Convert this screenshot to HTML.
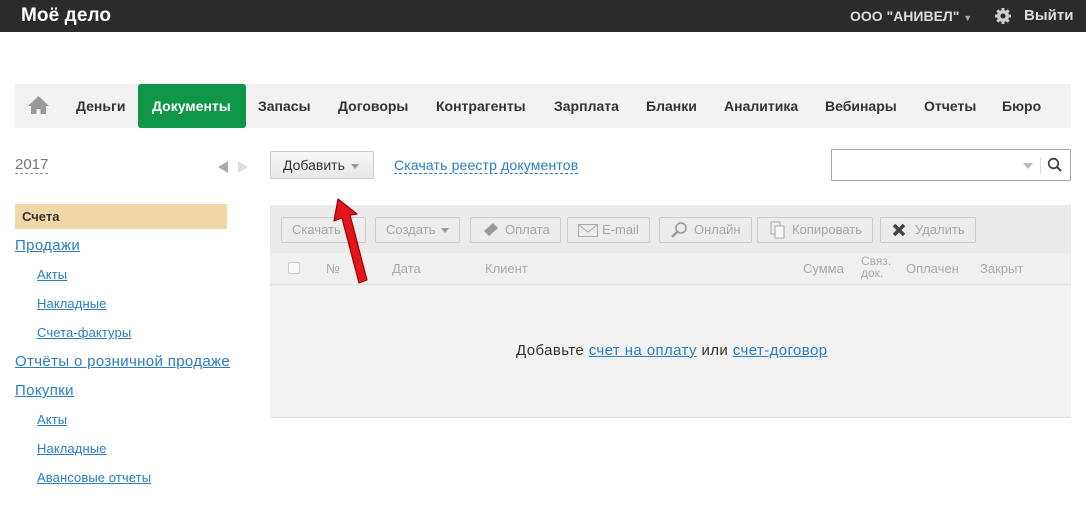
<!DOCTYPE html>
<html><head><meta charset="utf-8"><style>
*{box-sizing:border-box;margin:0;padding:0}
body{width:1086px;height:506px;background:#fff;font-family:"Liberation Sans",Arial,sans-serif;position:relative;overflow:hidden;color:#333}
.a{position:absolute;white-space:nowrap}
#top{left:0;top:0;width:1086px;height:32px;background:#2b2b2b}
#nav{left:15px;top:84px;width:1056px;height:44px;background:#f2f2f2}
.ni{position:absolute;top:14px;font-size:14px;font-weight:bold;color:#333}
.btn{position:absolute;top:12px;height:26px;border:1px solid #ccc;border-radius:2px;background:#ececec;color:#a8a8a8;font-size:13px;line-height:24px;padding:0 10px}
.car{display:inline-block;width:0;height:0;border-left:4px solid transparent;border-right:4px solid transparent;border-top:5px solid #999;vertical-align:middle;margin-left:6px}
a,.lk{color:#2a7ec1;text-decoration:underline}
.sb{position:absolute;left:15px;font-size:15px;letter-spacing:0.35px;color:#2a7ec1;text-decoration:underline}
.ss{position:absolute;left:37px;font-size:13px;letter-spacing:0.1px;color:#2a7ec1;text-decoration:underline}
.th{position:absolute;font-size:13px;color:#aaa}
</style></head><body>
<div class="a" id="top">
 <div class="a" style="left:21px;top:5px;font-size:19px;font-weight:bold;color:#fff;letter-spacing:0.1px">Моё дело</div>
 <div class="a" style="left:850px;top:8px;font-size:14px;font-weight:bold;color:#ddd">ООО "АНИВЕЛ" <span style="font-size:9px;color:#aaa">▼</span></div>
 <svg class="a" style="left:994px;top:7px" width="18" height="18" viewBox="0 0 18 18"><g fill="#ccc"><circle cx="9" cy="9" r="6"/><rect x="7.5" y="1" width="3" height="16"/><rect x="1" y="7.5" width="16" height="3"/><rect x="7.5" y="1" width="3" height="16" transform="rotate(45 9 9)"/><rect x="7.5" y="1" width="3" height="16" transform="rotate(-45 9 9)"/></g><circle cx="9" cy="9" r="2.5" fill="#2b2b2b"/></svg>
 <div class="a" style="left:1024px;top:7px;font-size:15px;font-weight:bold;color:#ddd">Выйти</div>
</div>
<div class="a" id="nav">
 <svg class="a" style="left:12px;top:11px" width="23" height="20" viewBox="0 0 23 20"><path d="M11.5 1L1 11h3v8h5.5v-5h4v5H19v-8h3z" fill="#999"/></svg>
 <div class="ni" style="left:61px">Деньги</div>
 <div class="a" style="left:123px;top:0;width:108px;height:44px;background:#0f9648;border-radius:3px"></div>
 <div class="ni" style="left:137px;color:#fff">Документы</div>
 <div class="ni" style="left:243px">Запасы</div>
 <div class="ni" style="left:323px">Договоры</div>
 <div class="ni" style="left:421px">Контрагенты</div>
 <div class="ni" style="left:539px">Зарплата</div>
 <div class="ni" style="left:631px">Бланки</div>
 <div class="ni" style="left:709px">Аналитика</div>
 <div class="ni" style="left:810px">Вебинары</div>
 <div class="ni" style="left:909px">Отчеты</div>
 <div class="ni" style="left:987px">Бюро</div>
</div>
<div class="a" style="left:15px;top:156px;font-size:15px;color:#777;border-bottom:1px dashed #999;line-height:17px">2017</div>
<div class="a" style="left:218px;top:161px;width:0;height:0;border-top:6px solid transparent;border-bottom:6px solid transparent;border-right:10px solid #aaa"></div>
<div class="a" style="left:238px;top:161px;width:0;height:0;border-top:6px solid transparent;border-bottom:6px solid transparent;border-left:10px solid #ddd"></div>
<div class="a" style="left:15px;top:204px;width:212px;height:25px;background:#f2d8a6"></div>
<div class="a" style="left:22px;top:209px;font-size:13px;font-weight:bold;color:#333">Счета</div>
<div class="sb" style="top:237px">Продажи</div>
<div class="ss" style="top:267px">Акты</div>
<div class="ss" style="top:296px">Накладные</div>
<div class="ss" style="top:325px">Счета-фактуры</div>
<div class="sb" style="top:353px">Отчёты о розничной продаже</div>
<div class="sb" style="top:382px">Покупки</div>
<div class="ss" style="top:412px">Акты</div>
<div class="ss" style="top:441px">Накладные</div>
<div class="ss" style="top:470px">Авансовые отчеты</div>

<div class="a" style="left:270px;top:151px;width:104px;height:28px;border:1px solid #c8c8c8;border-radius:2px;background:linear-gradient(#f7f7f7,#e8e8e8);font-size:14px;color:#333;line-height:26px;padding-left:12px">Добавить<span class="car"></span></div>
<div class="a" style="left:394px;top:157px;font-size:14px;letter-spacing:0.15px;color:#2a7ec1;border-bottom:1px dashed #2a7ec1;line-height:16px">Скачать реестр документов</div>
<div class="a" style="left:831px;top:149px;width:240px;height:32px;border:1px solid #aaa;background:#fff">
 <div class="a" style="left:191px;top:13px;width:0;height:0;border-left:5px solid transparent;border-right:5px solid transparent;border-top:6px solid #bbb"></div>
 <div class="a" style="left:208px;top:7px;width:1px;height:17px;background:#ddd"></div>
 <svg class="a" style="left:215px;top:7px" width="16" height="16" viewBox="0 0 16 16"><circle cx="6.5" cy="6.5" r="4.8" stroke="#444" stroke-width="1.8" fill="none"/><path d="M10 10l4 4" stroke="#444" stroke-width="2"/></svg>
</div>

<div class="a" style="left:270px;top:205px;width:801px;height:213px;background:#ebebeb;border-bottom:1px solid #ddd">
 <div class="btn" style="left:11px">Скачать<span class="car"></span></div>
 <div class="btn" style="left:105px">Создать<span class="car"></span></div>
 <div class="btn" style="left:200px;padding-left:34px">Оплата</div>
 <div class="btn" style="left:297px;padding-left:34px">E-mail</div>
 <div class="btn" style="left:389px;padding-left:34px">Онлайн</div>
 <div class="btn" style="left:487px;padding-left:34px">Копировать</div>
 <div class="btn" style="left:610px;padding-left:34px">Удалить</div>
 <svg class="a" style="left:212px;top:17px" width="18" height="16"><path d="M2 9l9-8 5 5-9 8z" fill="#999"/></svg>
 <svg class="a" style="left:308px;top:19px" width="20" height="13"><rect x="0.5" y="0.5" width="19" height="12" fill="none" stroke="#aaa"/><path d="M1 1l9 7 9-7" fill="none" stroke="#aaa"/></svg>
 <svg class="a" style="left:400px;top:16px" width="18" height="18"><circle cx="11" cy="7" r="5" fill="none" stroke="#999" stroke-width="1.5"/><path d="M7 11l-5 5" stroke="#999" stroke-width="2.5"/></svg>
 <svg class="a" style="left:500px;top:16px" width="16" height="18"><rect x="1" y="1" width="9" height="12" fill="#eee" stroke="#aaa"/><rect x="5" y="5" width="9" height="12" fill="#f6f6f6" stroke="#aaa"/></svg>
 <svg class="a" style="left:622px;top:18px" width="14" height="14"><path d="M2 2l10 10M12 2L2 12" stroke="#444" stroke-width="3.5"/></svg>
 <div class="a" style="left:0;top:48px;width:801px;height:32px;background:#f0f0f0;border-bottom:1px solid #e2e2e2"></div>
 <div class="a" style="left:18px;top:57px;width:12px;height:12px;border:1px solid #ccc;border-radius:2px;background:#f8f8f8"></div>
 <div class="th" style="left:56px;top:56px">№</div>
 <div class="th" style="left:122px;top:56px">Дата</div>
 <div class="th" style="left:215px;top:56px">Клиент</div>
 <div class="th" style="left:533px;top:56px">Сумма</div>
 <div class="th" style="left:591px;top:50px;font-size:12px;line-height:12px">Связ.<br>док.</div>
 <div class="th" style="left:636px;top:56px">Оплачен</div>
 <div class="th" style="left:710px;top:56px">Закрыт</div>
 <div class="a" style="left:0;top:81px;width:801px;height:131px;background:#f2f2f2"></div>
 <div class="a" style="left:246px;top:137px;font-size:15px;letter-spacing:0.4px;color:#333">Добавьте <span class="lk">счет на оплату</span> или <span class="lk">счет-договор</span></div>
</div>
<svg class="a" style="left:325px;top:192px" width="50" height="100"><path d="M13 7L32 22 25 23 42 88 34 91 17 26 9 29z" fill="#e3141a" stroke="#9a0000" stroke-width="1.2" stroke-linejoin="round"/></svg>
</body></html>
